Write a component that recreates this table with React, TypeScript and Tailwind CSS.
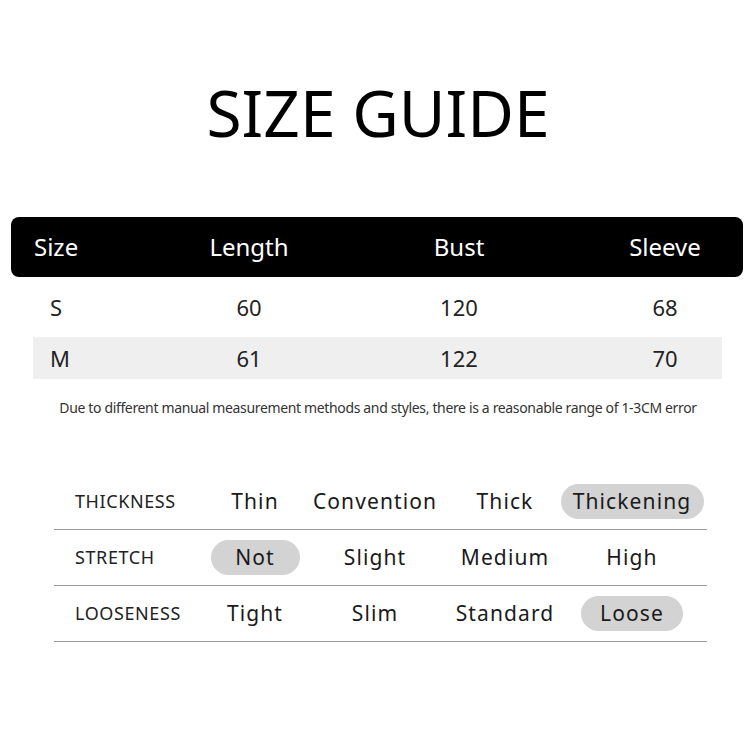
const font = { fontFamily: '"Noto Sans", "Open Sans", sans-serif' };

const sizes = [
  { size: "S", length: "60", bust: "120", sleeve: "68", shade: false },
  { size: "M", length: "61", bust: "122", sleeve: "70", shade: true },
];

const attrs = [
  { label: "THICKNESS", options: ["Thin", "Convention", "Thick", "Thickening"], active: 3, pill: "w-[143px]" },
  { label: "STRETCH", options: ["Not", "Slight", "Medium", "High"], active: 0, pill: "w-[89px]" },
  { label: "LOOSENESS", options: ["Tight", "Slim", "Standard", "Loose"], active: 3, pill: "w-[102px]" },
];

export default function App() {
  return (
    <div className="w-[756px] h-[756px] bg-white text-[#1a1a1a] overflow-hidden" style={font}>
      <h1 className="mt-[81px] h-[64px] text-center text-[64px] leading-none font-normal text-black">SIZE GUIDE</h1>

      {/* Size table */}
      <div className="mt-[72px] ml-[11px] w-[732px] h-[60px] rounded-[8px] bg-black text-white text-[24px] grid grid-cols-[138px_200px_220px_174px] items-center">
        <div className="pl-[23px]">Size</div>
        <div className="text-center">Length</div>
        <div className="text-center">Bust</div>
        <div className="text-center pl-[18px]">Sleeve</div>
      </div>
      {sizes.map((r) => (
        <div
          key={r.size}
          className={`ml-[33px] w-[689px] grid grid-cols-[116px_200px_220px_153px] items-center text-[22px] text-[#222] ${r.shade ? "h-[42px] bg-[#efefef]" : "h-[60px]"}`}
        >
          <div className="pl-[17px]">{r.size}</div>
          <div className="text-center">{r.length}</div>
          <div className="text-center">{r.bust}</div>
          <div className="text-center pl-[39px]">{r.sleeve}</div>
        </div>
      ))}

      <p className="mt-[19px] h-[20px] text-center text-[14px] leading-[20px] text-[#333] tracking-[-0.35px] whitespace-nowrap">
        Due to different manual measurement methods and styles, there is a reasonable range of 1-3CM error
      </p>

      {/* Fabric attributes */}
      <div className="mt-[56px] ml-[54px] w-[653px]">
        {attrs.map((a) => (
          <div
            key={a.label}
            className="h-[56px] border-b-[1.5px] border-[#9a9a9a] grid grid-cols-[146px_110px_130px_130px_124px] items-center"
          >
            <div className="pl-[21px] text-[18px] tracking-[0.6px] text-[#222]">{a.label}</div>
            {a.options.map((o, i) => (
              <div key={o} className="flex justify-center">
                {i === a.active ? (
                  <span className={`${a.pill} shrink-0 h-[35px] rounded-full bg-[#d3d3d3] flex items-center justify-center text-[21px] tracking-[1.1px] text-[#1a1a1a] whitespace-nowrap`}>
                    {o}
                  </span>
                ) : (
                  <span className="text-[21px] tracking-[1.1px] text-[#1a1a1a] whitespace-nowrap">{o}</span>
                )}
              </div>
            ))}
          </div>
        ))}
      </div>
    </div>
  );
}
